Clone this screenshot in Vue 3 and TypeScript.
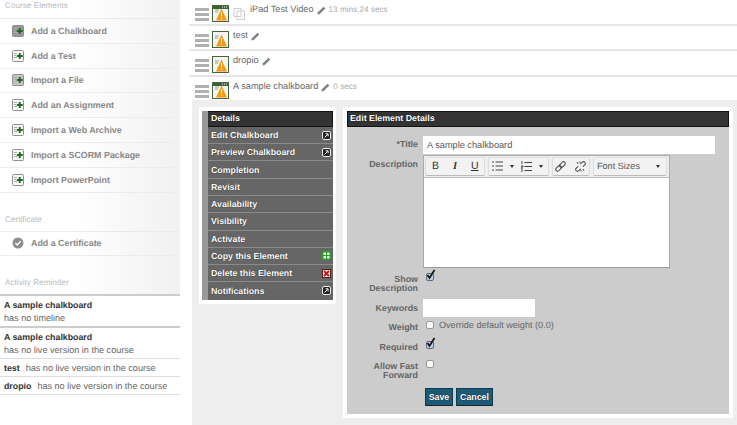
<script setup lang="ts">
const elements = [
  { label: 'Add a Chalkboard', kind: 'dark' },
  { label: 'Add a Test', kind: 'light' },
  { label: 'Import a File', kind: 'mid' },
  { label: 'Add an Assignment', kind: 'light' },
  { label: 'Import a Web Archive', kind: 'light' },
  { label: 'Import a SCORM Package', kind: 'light' },
  { label: 'Import PowerPoint', kind: 'light' },
]
const reminders = [
  { title: 'A sample chalkboard', note: 'has no timeline', stacked: true, heavy: true },
  { title: 'A sample chalkboard', note: 'has no live version in the course', stacked: true, heavy: false },
  { title: 'test', note: 'has no live version in the course', stacked: false, heavy: false },
  { title: 'dropio', note: 'has no live version in the course', stacked: false, heavy: false },
]
const rows = [
  { title: 'iPad Test Video', time: '13 mins,24 secs', dark: true, copy: true },
  { title: 'test', time: '', dark: false, copy: false },
  { title: 'dropio', time: '', dark: false, copy: false },
  { title: 'A sample chalkboard', time: '0 secs', dark: true, copy: false },
]
const menu = [
  { label: 'Edit Chalkboard', icon: 'go' },
  { label: 'Preview Chalkboard', icon: 'go' },
  { label: 'Completion', icon: '' },
  { label: 'Revisit', icon: '' },
  { label: 'Availability', icon: '' },
  { label: 'Visibility', icon: '' },
  { label: 'Activate', icon: '' },
  { label: 'Copy this Element', icon: 'copy' },
  { label: 'Delete this Element', icon: 'delete' },
  { label: 'Notifications', icon: 'go' },
]
</script>

<template>
  <div class="page">
    <aside class="sidebar">
      <div class="shaded">
        <h3 class="side-head first">Course Elements</h3>
        <a v-for="e in elements" :key="e.label" class="side-link">
          <svg class="side-icon" width="12" height="12" viewBox="0 0 12 12">
            <rect x=".5" y=".5" width="11" height="11" rx="1" :fill="e.kind === 'dark' ? '#9a9a9a' : e.kind === 'mid' ? '#c4c4c4' : '#f8f8f8'" stroke="#8f8f8f" />
            <path d="M2 3.500h3M2 5.500h2M2 7.500h3" stroke="#aaa" />
            <path d="M6.800 3h1.900v2h2v1.900h-2v2H6.800v-2h-2V5h2z" fill="#1f6a1f" />
          </svg>
          {{ e.label }}
        </a>
        <h3 class="side-head cert">Certificate</h3>
        <a class="side-link">
          <svg class="side-icon" width="12" height="12" viewBox="0 0 12 12">
            <circle cx="6" cy="6" r="5.500" fill="#8c8c8c" />
            <path d="M3.400 6l1.900 2 3.400-3.800" fill="none" stroke="#fff" stroke-width="1.400" />
          </svg>
          Add a Certificate
        </a>
        <h3 class="side-head activity">Activity Reminder</h3>
      </div>
      <div class="reminders">
        <div v-for="(r, i) in reminders" :key="i" class="reminder" :class="{ heavy: r.heavy, stacked: r.stacked }">
          <strong>{{ r.title }}</strong>
          <span>{{ r.note }}</span>
        </div>
      </div>
    </aside>

    <main class="main">
      <div v-for="r in rows" :key="r.title" class="row">
        <span class="handle"><i></i><i></i><i></i></span>
        <svg class="type-icon" width="17" height="17" viewBox="0 0 17 17">
          <rect x=".5" y=".5" width="16" height="16" fill="#f4f4f0" stroke="#44683a" />
          <rect v-if="r.dark" x="1" y="1" width="15" height="3" fill="#3f5f35" />
          <path v-if="r.dark" d="M10 2h1M12 2h1M14 2h1" stroke="#fff" />
          <path d="M3 5h4M3 7h3" stroke="#999" />
          <path d="M9.500 3.500L15 15.500H4z" fill="#f29a16" />
          <path d="M9.100 7h1l-.1 4.500h-.8zM9 12.500h1.100v1.300H9z" fill="#fff" />
        </svg>
        <svg v-if="r.copy" class="copy-icon" width="13" height="13" viewBox="0 0 13 13">
          <path d="M1 1.500h7v8H1zM4 4h7.500v8.500H4z" fill="#fff" stroke="#ccc" />
        </svg>
        <span class="row-title">{{ r.title }}</span>
        <svg class="pencil" width="9" height="9" viewBox="0 0 8 8">
          <path d="M5.800.6l1.600 1.600-5 5L.4 7.600l.4-2z" fill="#808080" />
        </svg>
        <span v-if="r.time" class="row-time">{{ r.time }}</span>
      </div>

      <section class="panel">
        <nav class="card menu-card">
          <div class="menu">
            <div class="menu-head">Details</div>
            <a v-for="m in menu" :key="m.label" class="menu-item">
              {{ m.label }}
              <svg v-if="m.icon === 'go'" width="9" height="9" viewBox="0 0 9 9">
                <rect x=".5" y=".5" width="8" height="8" rx="1.500" fill="#222" stroke="#eee" />
                <path d="M2.600 6.500L5.600 3.400M3.600 2.800h2.500v2.500" stroke="#fff" fill="none" />
              </svg>
              <svg v-else-if="m.icon === 'copy'" width="9" height="9" viewBox="0 0 9 9">
                <rect width="9" height="9" rx="1" fill="#2c9a2c" />
                <path d="M1.500 1.500h2.500v2.500h-2.500zM5 1.500h2.500v2.500H5zM1.500 5h2.500v2.500h-2.500zM5 5h2.500v2.500H5z" fill="#e8f8e8" />
              </svg>
              <svg v-else-if="m.icon === 'delete'" width="9" height="9" viewBox="0 0 9 9">
                <rect x=".5" y=".5" width="8" height="8" fill="#f4e4e4" stroke="#5a2020" />
                <path d="M2 2l5 5M7 2L2 7" stroke="#c01818" stroke-width="1.800" />
              </svg>
            </a>
          </div>
        </nav>

        <div class="card form-card">
          <div class="form">
            <div class="form-head">Edit Element Details</div>
            <div class="form-body">
              <div class="f-row title-row">
                <label class="f-label">*Title</label>
                <input class="text title-input" value="A sample chalkboard" />
              </div>
              <div class="f-row desc-row">
                <label class="f-label">Description</label>
                <div class="editor">
                  <div class="toolbar">
                    <div class="tgroup g1">
                      <b class="tb">B</b>
                      <i class="tb ti">I</i>
                      <u class="tb">U</u>
                    </div>
                    <div class="tgroup g2">
                      <svg width="11" height="10" viewBox="0 0 11 10"><path d="M0 1h2M0 5h2M0 9h2M3.500 1H11M3.500 5H11M3.500 9H11" stroke="#444" /></svg>
                      <span class="caret"></span>
                      <svg class="ol" width="11" height="11" viewBox="0 0 11 11"><path d="M1 0v3M0 5h2v1H0v2h2M0 10h2M3.500 1.500H11M3.500 5.500H11M3.500 9.500H11" stroke="#444" fill="none" /></svg>
                      <span class="caret"></span>
                    </div>
                    <div class="tgroup g3">
                      <svg width="11" height="11" viewBox="0 0 11 11"><g transform="rotate(-45 5.500 5.500)" fill="none" stroke="#444"><rect x="-.5" y="3.700" width="6.500" height="3.600" rx="1.800" /><rect x="5" y="3.700" width="6.500" height="3.600" rx="1.800" /></g></svg>
                      <svg width="11" height="11" viewBox="0 0 11 11"><g transform="rotate(-45 5.500 5.500)" fill="none" stroke="#444"><path d="M4 3.700H1.300a1.800 1.800 0 0 0 0 3.600H4M7 3.700h2.700a1.800 1.800 0 0 1 0 3.600H7" /></g><path d="M2 1l1 2M5 .5v1.500M9 10l-1-2M6 10.500V9" stroke="#444" /></svg>
                    </div>
                    <div class="tgroup g4">
                      <span>Font Sizes</span>
                      <span class="caret"></span>
                    </div>
                  </div>
                  <div class="editor-body"></div>
                </div>
              </div>
              <div class="f-row show-row">
                <label class="f-label">Show Description</label>
                <span class="check on">
                  <svg width="10" height="12" viewBox="0 0 10 12"><path d="M1.500 6l2 3L8.500 1" fill="none" stroke="#111" stroke-width="1.700" /></svg>
                </span>
              </div>
              <div class="f-row key-row">
                <label class="f-label">Keywords</label>
                <input class="text key-input" />
              </div>
              <div class="f-row weight-row">
                <label class="f-label">Weight</label>
                <span class="check"></span>
                <span class="override">Override default weight (0.0)</span>
              </div>
              <div class="f-row req-row">
                <label class="f-label">Required</label>
                <span class="check on">
                  <svg width="10" height="12" viewBox="0 0 10 12"><path d="M1.500 6l2 3L8.500 1" fill="none" stroke="#111" stroke-width="1.700" /></svg>
                </span>
              </div>
              <div class="f-row fast-row">
                <label class="f-label">Allow Fast Forward</label>
                <span class="check"></span>
              </div>
              <div class="actions">
                <button class="btn save">Save</button>
                <button class="btn cancel">Cancel</button>
              </div>
            </div>
          </div>
        </div>
      </section>
    </main>
  </div>
</template>

<style>
html, body { margin: 0; background: #fff; }
</style>

<style scoped>
.page {
  width: 737px;
  height: 425px;
  overflow: hidden;
  display: flex;
  background: #fff;
  font-family: "Liberation Sans", Arial, sans-serif;
  font-size: 9.1px;
  color: #555;
  text-rendering: geometricPrecision;
}
.sidebar { width: 180px; flex: none; }
.shaded {
  height: 295px;
  box-sizing: border-box;
  background: linear-gradient(90deg, #fff 40%, #f1f1f1 100%);
}
.side-head {
  margin: 0;
  padding-left: 5px;
  font-size: 8.2px;
  font-weight: 400;
  color: #bbb;
  line-height: 12px;
}
.side-head.first { padding-bottom: 6px; border-bottom: 1px solid #eaeaea; height: 12px; }
.side-head.cert { margin-top: 21px; padding-bottom: 5px; border-bottom: 1px solid #eaeaea; }
.side-head.activity { margin-top: 21px; }
.side-link {
  display: flex;
  align-items: center;
  height: 23.8px;
  padding-left: 12px;
  font-size: 8.9px;
  font-weight: 700;
  color: #888;
  border-bottom: 1px solid #ececec;
}
.side-icon { margin-right: 7px; flex: none; }
.reminders { border-top: 2px solid #ccc; margin-top: -1px; }
.reminder {
  padding: 2px 0 0 4px;
  height: 15px;
  line-height: 14px;
  color: #666;
  border-bottom: 1px solid #ddd;
  white-space: nowrap;
}
.reminder strong { color: #333; margin-right: 6px; font-size: 8.8px; }
.reminder.stacked { height: 28px; }
.reminder.stacked strong { display: block; margin: 0; line-height: 13px; padding-top: 1px; }
.reminder.stacked span { display: block; line-height: 13px; }
.reminder.heavy { border-bottom: 2px solid #ccc; }

.main { margin-left: 9px; flex: 1; min-width: 0; }
.row {
  height: 23.7px;
  padding-left: 6px;
  display: flex;
  align-items: flex-start;
  border-bottom: 2px solid #e6e6e6;
  color: #666;
}
.handle { width: 14px; margin-top: 8px; display: flex; flex-direction: column; gap: 2px; }
.handle i { display: block; height: 3px; background: #b0b0b0; }
.type-icon { margin: 5px 0 0 3px; flex: none; }
.copy-icon { margin: 7px 0 0 4px; flex: none; }
.row-title { margin: 4px 0 0 4px; font-size: 9.2px; line-height: 11px; }
.pencil { margin: 6px 0 0 3px; flex: none; }
.row-time { margin: 3px 0 0 3px; font-size: 8.2px; line-height: 13px; color: #aaa; }
.row:last-of-type { height: 22.900px; border-bottom: 0; }

.panel {
  margin-left: 3px;
  height: 325px;
  background: #eee;
  display: flex;
  align-items: flex-start;
  padding: 7px 5px 0 7px;
  box-sizing: border-box;
  gap: 7px;
}
.card { background: #fff; padding: 4px 3px; flex: none; }
.menu-card { width: 131px; }
.menu { background: #666; border-left: 6px solid #999; }
.menu-head {
  height: 16px;
  line-height: 13px;
  padding-left: 3px;
  box-sizing: border-box;
  background: #333;
  border: 1px solid #111;
  border-left: 0;
  color: #fff;
  font-size: 8.8px;
  font-weight: 700;
  text-shadow: 0 0 1px #000;
}
.menu-item {
  display: flex;
  align-items: center;
  justify-content: space-between;
  height: 17.280px;
  box-sizing: border-box;
  padding: 0 2px 0 3px;
  border-bottom: 1px solid #8a8a8a;
  color: #fff;
  font-size: 8.8px;
  font-weight: 700;
  text-shadow: 0 0 1px #111;
}
.menu-item:last-child { border-bottom: 0; }
.form-card { width: 382px; padding: 4px; }
.form { background: #ccc; height: 303px; }
.form-head {
  height: 16px;
  line-height: 13px;
  padding-left: 2px;
  box-sizing: border-box;
  background: #333;
  border: 1px solid #111;
  color: #fff;
  font-size: 8.8px;
  font-weight: 700;
  text-shadow: 0 0 1px #000;
}
.form-body { padding-top: 9px; }
.f-row { display: flex; align-items: flex-start; }
.f-label {
  width: 71px;
  margin-right: 5px;
  flex: none;
  text-align: right;
  color: #666;
  font-size: 8.9px;
  font-weight: 700;
  line-height: 9px;
  padding-top: 2px;
  box-sizing: border-box;
}
.text {
  display: block;
  height: 18px;
  box-sizing: border-box;
  border: 0;
  outline: 0;
  background: #fff;
  padding: 0 4px;
  font: 9.2px "Liberation Sans", Arial, sans-serif;
  color: #555;
}
.title-input { width: 292px; }
.key-input { width: 112px; }
.title-row .f-label { padding-top: 4px; }
.key-row .f-label { padding-top: 5px; }
.desc-row { margin-top: 1px; }
.desc-row .f-label { padding-top: 5px; }
.editor {
  width: 247px;
  box-sizing: border-box;
  border: 1px solid #aaa;
  border-bottom: 1px solid #999;
  background: #eee;
}
.toolbar { height: 22px; display: flex; align-items: flex-start; padding: 1px 0 0 1px; box-sizing: border-box; gap: 3px; border-bottom: 1px solid #bbb; }
.tgroup {
  height: 19px;
  box-sizing: border-box;
  background: #f2f2f2;
  border: 1px solid #ddd;
  border-bottom-color: #bbb;
  border-radius: 2px;
  display: flex;
  align-items: center;
  color: #444;
  font-size: 9.1px;
}
.g1 { width: 60px; padding-left: 6px; gap: 12.500px; }
.g2 { width: 61px; padding-left: 2.500px; }
.g3 { width: 38px; padding-left: 1.500px; gap: 9px; }
.g4 { width: 74px; padding-left: 3px; justify-content: space-between; padding-right: 6.500px; color: #555; }
.tb { font-size: 10.500px; width: 7px; text-align: center; color: #333; font-style: normal; font-weight: 400; }
.ti { font-style: italic; font-family: "Liberation Serif", serif; font-weight: 700; }
.caret { width: 0; height: 0; border: 2.500px solid transparent; border-top: 3px solid #333; border-bottom: 0; margin-left: 7px; }
.g4 .caret { margin-left: 0; }
.ol { margin-left: 7px; }
.editor-body { height: 89px; background: #fff; }
.check {
  position: relative;
  display: block;
  width: 8px;
  height: 8px;
  margin: 0 0 0 3px;
  flex: none;
  box-sizing: border-box;
  border: 1px solid #999;
  border-radius: 2px;
  background: #f8f8f8;
}
.check.on { background: #b4cff2; border-color: #667; }
.check svg { position: absolute; left: -1px; top: -5px; }
.show-row { margin-top: 5px; height: 19px; }
.key-row { margin-top: 7px; }
.weight-row { margin-top: 4px; height: 10px; }
.override { margin: -2px 0 0 5px; line-height: 12px; color: #666; }
.req-row { margin-top: 10px; height: 10px; }
.fast-row { margin-top: 9px; height: 19px; }
.actions { margin: 9px 0 0 78px; display: flex; gap: 3px; }
.btn {
  height: 18px;
  padding: 0;
  box-sizing: border-box;
  border: 1px solid #0e3a50;
  border-bottom-color: #222;
  background: #1d5a78;
  color: #fff;
  font: 700 8.800px "Liberation Sans", Arial, sans-serif;
  text-shadow: 0 0 1px #000;
}
.save { width: 28px; }
.cancel { width: 37px; }
</style>
